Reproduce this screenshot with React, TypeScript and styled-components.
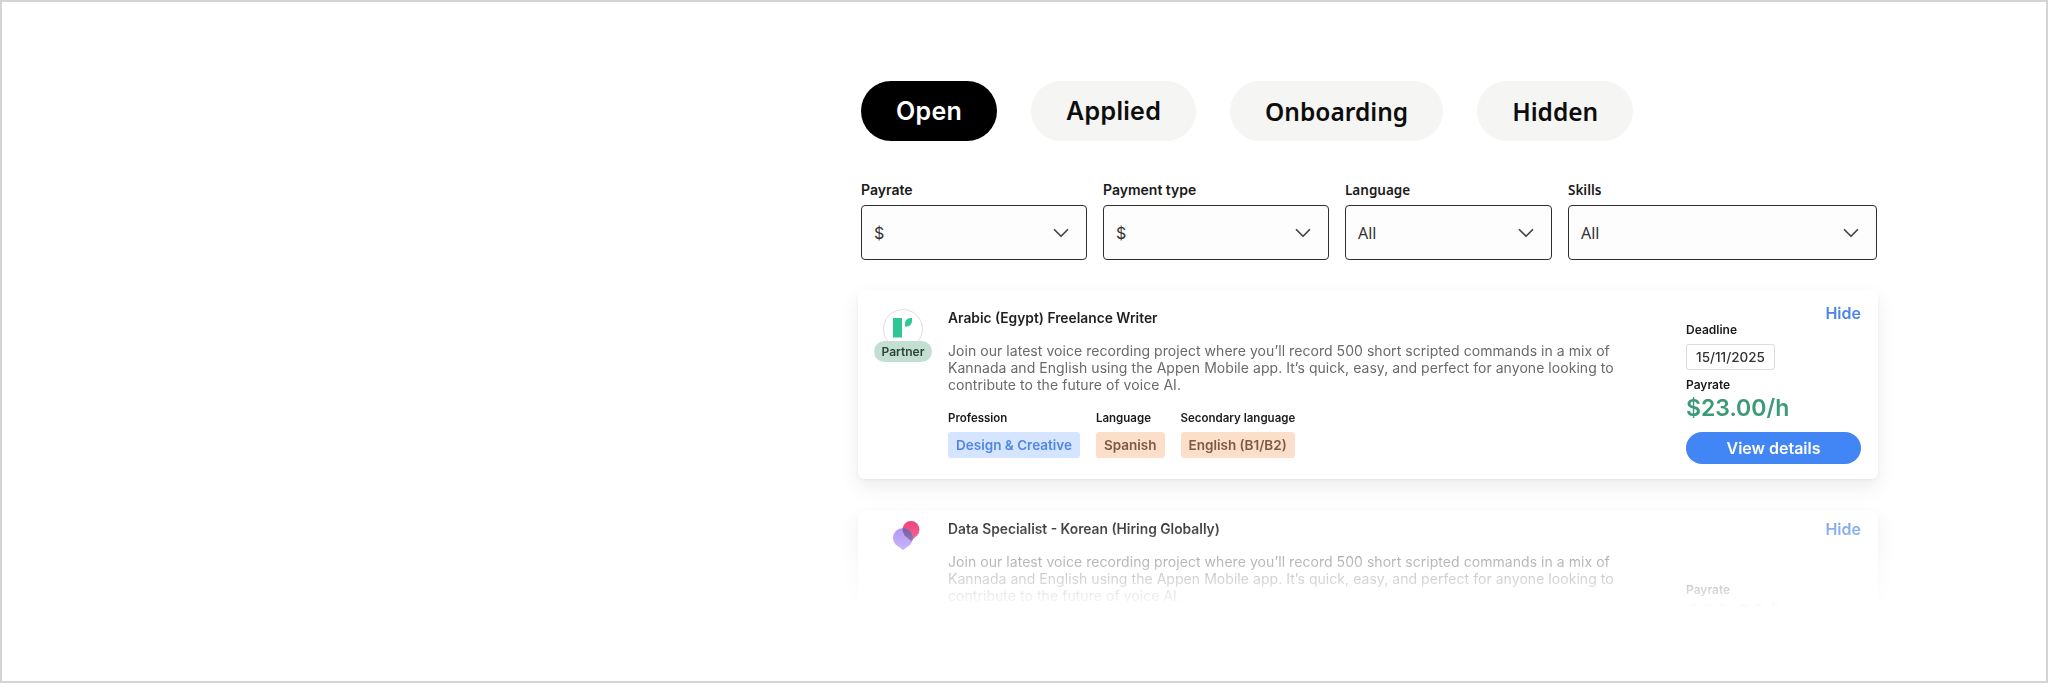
import styled, { createGlobalStyle } from 'styled-components';
import { ChevronDown } from 'lucide-react';

const workSans = '"Inter", "Noto Sans", sans-serif';
const plexSans = '"Noto Sans", "Roboto", sans-serif';

const GlobalStyle = createGlobalStyle`
  * {
    box-sizing: border-box;
  }

  html,
  body {
    margin: 0;
    background: #fff;
  }
`;

const Frame = styled.div`
  width: 2048px;
  height: 683px;
  border: 2px solid #d4d4d4;
  padding: 79px 0 0 859px;
  overflow: hidden;
  font-family: ${workSans};
  color: #1a1a1a;
`;

const Tabs = styled.div`
  display: flex;
  gap: 34px;
`;

const Tab = styled.div<{ $active?: boolean; $plex?: boolean }>`
  height: 60px;
  padding: 0 35px;
  border-radius: 30px;
  display: flex;
  align-items: center;
  font-family: ${(props) => (props.$plex ? plexSans : workSans)};
  font-size: ${(props) => (props.$plex ? '24.5px' : '25px')};
  letter-spacing: ${(props) => (props.$plex ? '0' : '0.3px')};
  font-weight: 600;
  background: ${(props) => (props.$active ? '#000' : '#f5f5f3')};
  color: ${(props) => (props.$active ? '#fff' : '#0d0d0d')};
`;

const Filters = styled.div`
  display: grid;
  grid-template-columns: 226px 226px 207px 309px;
  gap: 16px;
  margin-top: 40px;
`;

const FilterLabel = styled.div<{ $plex?: boolean }>`
  font-family: ${(props) => (props.$plex ? plexSans : workSans)};
  font-size: ${(props) => (props.$plex ? '13.5px' : '14px')};
  font-weight: 600;
  line-height: 18px;
  margin-bottom: 6px;
`;

const SelectBox = styled.div<{ $plex?: boolean }>`
  height: 55px;
  border: 1.5px solid #2e2e2e;
  border-radius: 4px;
  background: #fdfdfd;
  padding: 0 12px 0 12px;
  display: flex;
  align-items: center;
  justify-content: space-between;
  font-family: ${(props) => (props.$plex ? plexSans : workSans)};
  font-size: 16px;
  color: #333;
`;

const Chevron = styled(ChevronDown)`
  color: #444;
`;

const List = styled.div`
  width: 1060px;
  height: 370px;
  margin: 10px 0 0 -23px;
  padding: 20px 20px 0;
  overflow: hidden;
  -webkit-mask-image: linear-gradient(to bottom, #000 243px, transparent 338px);
  mask-image: linear-gradient(to bottom, #000 243px, transparent 338px);
`;

const Card = styled.div`
  display: grid;
  grid-template-columns: 58px 1fr 175px;
  column-gap: 16px;
  height: 189px;
  padding: 0 17px 0 16px;
  margin-bottom: 31px;
  border-radius: 6px;
  background: #fff;
  box-shadow: 0 8px 20px rgba(0, 0, 0, 0.08), 0 1px 3px rgba(0, 0, 0, 0.06);
`;

const LogoColumn = styled.div<{ $top: number }>`
  display: flex;
  flex-direction: column;
  align-items: center;
  padding-top: ${(props) => props.$top}px;
`;

const LogoCircle = styled.div`
  width: 40px;
  height: 40px;
  border: 1.5px solid #e4dcdc;
  border-radius: 50%;
  background: #fff;
  display: flex;
  align-items: center;
  justify-content: center;
`;

const PartnerPill = styled.div`
  width: 58px;
  height: 21px;
  margin-top: -8px;
  border-radius: 11px;
  background: #c3dfd2;
  color: #2c4238;
  font-size: 12px;
  font-weight: 600;
  display: flex;
  align-items: center;
  justify-content: center;
  position: relative;
`;

const Body = styled.div<{ $top: number }>`
  padding-top: ${(props) => props.$top}px;
  min-width: 0;
`;

const Title = styled.div`
  font-size: 13.8px;
  font-weight: 600;
  line-height: 20px;
  white-space: nowrap;
  color: #1f1f1f;
`;

const Description = styled.p`
  margin: 14px 0 0;
  font-size: 14px;
  line-height: 17px;
  letter-spacing: 0.05px;
  color: #6a6a6a;
  white-space: nowrap;
`;

const Meta = styled.div`
  display: flex;
  gap: 16px;
  margin-top: 17px;
`;

const MetaLabel = styled.div`
  font-size: 11.5px;
  font-weight: 600;
  line-height: 16px;
  margin-bottom: 6px;
`;

const Tag = styled.div<{ $tone: 'blue' | 'orange' }>`
  height: 26px;
  padding: 0 8px;
  border-radius: 3px;
  display: inline-flex;
  align-items: center;
  font-size: 13.5px;
  font-weight: 600;
  background: ${(props) => (props.$tone === 'blue' ? '#d5e5ff' : '#fbdfcb')};
  color: ${(props) => (props.$tone === 'blue' ? '#4f86e6' : '#7d5a44')};
`;

const Side = styled.div<{ $top: number }>`
  padding-top: ${(props) => props.$top}px;
  display: flex;
  flex-direction: column;
  align-items: flex-start;
`;

const HideLink = styled.div<{ $muted?: boolean }>`
  align-self: flex-end;
  font-size: 16px;
  font-weight: 600;
  line-height: 20px;
  color: ${(props) => (props.$muted ? '#6f9eec' : '#4a86e8')};
`;

const SideLabel = styled.div<{ $top: number }>`
  margin-top: ${(props) => props.$top}px;
  font-size: 12px;
  font-weight: 600;
  line-height: 16px;
  color: #1a1a1a;
`;

const DateBox = styled.div`
  width: 89px;
  height: 26px;
  margin-top: 6px;
  border: 1px solid #dcdcdc;
  border-radius: 3px;
  display: flex;
  align-items: center;
  justify-content: center;
  font-size: 13.5px;
  font-weight: 500;
  color: #333;
`;

const Rate = styled.div`
  font-size: 23px;
  font-weight: 600;
  line-height: 30px;
  color: #3d9a78;
`;

const DetailsButton = styled.div`
  width: 175px;
  height: 32px;
  margin-top: 9px;
  border-radius: 16px;
  background: #4285f4;
  color: #fff;
  font-size: 16px;
  font-weight: 600;
  display: flex;
  align-items: center;
  justify-content: center;
`;

const PartnerLogo = () => (
  <svg width="38" height="38" viewBox="0 0 38 38" fill="#2fc894">
    <rect x="9" y="8" width="9" height="19.5" />
    <path d="M28 8v3a5.5 5.5 0 0 1-5.5 5.5H21v-3A5.5 5.5 0 0 1 26.5 8z" />
  </svg>
);

const DropLogo = () => (
  <svg width="38" height="32" viewBox="0 0 38 32">
    <defs>
      <clipPath id="pink-drop">
        <circle cx="27" cy="9.5" r="8.5" />
        <path d="M27 21 L20 15 L34 15 Z" />
      </clipPath>
    </defs>
    <circle cx="27" cy="9.5" r="8.5" fill="#ee2f6f" />
    <path d="M27 21 L20.5 15 L33.5 15 Z" fill="#ee2f6f" />
    <path d="M19 30 L11.5 24.6 A10 10 0 1 1 26.5 24.6 Z" fill="#a585f5" />
    <g clipPath="url(#pink-drop)">
      <path d="M19 30 L11.5 24.6 A10 10 0 1 1 26.5 24.6 Z" fill="#62408f" />
    </g>
  </svg>
);

const Filter = ({ label, value, plex }: { label: string; value: string; plex?: boolean }) => (
  <div>
    <FilterLabel $plex={plex}>{label}</FilterLabel>
    <SelectBox $plex={plex}>
      {value}
      <Chevron size={26} strokeWidth={1.6} />
    </SelectBox>
  </div>
);

const description = (
  <Description>
    Join our latest voice recording project where you’ll record 500 short scripted commands in a mix of
    <br />
    Kannada and English using the Appen Mobile app. It’s quick, easy, and perfect for anyone looking to
    <br />
    contribute to the future of voice AI.
  </Description>
);

export default function App() {
  return (
    <>
      <GlobalStyle />
      <Frame>
        <Tabs>
          <Tab $active>Open</Tab>
          <Tab>Applied</Tab>
          <Tab $plex>Onboarding</Tab>
          <Tab $plex>Hidden</Tab>
        </Tabs>
        <Filters>
          <Filter label="Payrate" value="$" />
          <Filter label="Payment type" value="$" />
          <Filter label="Language" value="All" plex />
          <Filter label="Skills" value="All" plex />
        </Filters>
        <List>
          <Card>
            <LogoColumn $top={19}>
              <LogoCircle>
                <PartnerLogo />
              </LogoCircle>
              <PartnerPill>Partner</PartnerPill>
            </LogoColumn>
            <Body $top={18}>
              <Title>Arabic (Egypt) Freelance Writer</Title>
              {description}
              <Meta>
                <div>
                  <MetaLabel>Profession</MetaLabel>
                  <Tag $tone="blue">Design &amp; Creative</Tag>
                </div>
                <div>
                  <MetaLabel>Language</MetaLabel>
                  <Tag $tone="orange">Spanish</Tag>
                </div>
                <div>
                  <MetaLabel>Secondary language</MetaLabel>
                  <Tag $tone="orange">English (B1/B2)</Tag>
                </div>
              </Meta>
            </Body>
            <Side $top={13}>
              <HideLink>Hide</HideLink>
              <SideLabel $top={-1}>Deadline</SideLabel>
              <DateBox>15/11/2025</DateBox>
              <SideLabel $top={7}>Payrate</SideLabel>
              <Rate>$23.00/h</Rate>
              <DetailsButton>View details</DetailsButton>
            </Side>
          </Card>
          <Card>
            <LogoColumn $top={10}>
              <DropLogo />
            </LogoColumn>
            <Body $top={9}>
              <Title>Data Specialist - Korean (Hiring Globally)</Title>
              {description}
            </Body>
            <Side $top={9}>
              <HideLink $muted>Hide</HideLink>
              <SideLabel $top={43}>Payrate</SideLabel>
              <Rate>$23.00/h</Rate>
            </Side>
          </Card>
        </List>
      </Frame>
    </>
  );
}
